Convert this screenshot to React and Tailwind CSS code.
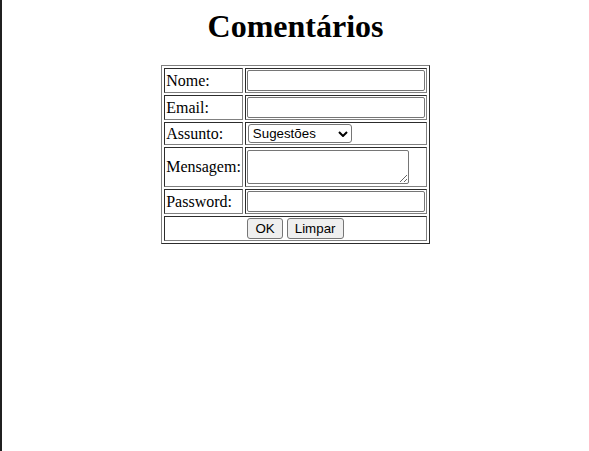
import React from "react";

const cell =
  "border border-[gray] [--tw-border-style:inset] [border-style:inset] p-px align-middle";
const inputCls =
  "block w-[178px] h-[21px] border border-[#767676] rounded-[2px] px-[2px] bg-white text-black font-['Liberation_Sans',Arial,sans-serif] text-[13.333px] outline-none";
const btnCls =
  "h-[21px] px-[7px] border border-[#767676] rounded-[3px] bg-[#efefef] text-black font-['Liberation_Sans',Arial,sans-serif] text-[13.333px] leading-none";

export default function App() {
  return (
    <div className="min-h-screen border-l-2 border-[#202020] bg-white pt-2 px-2 text-black font-['Liberation_Serif','Times_New_Roman',serif] text-[16px] leading-[normal]">
      <h1 className="text-center text-[32px] font-bold leading-[37px] mb-[20px]">
        Comentários
      </h1>
      <table className="mx-auto border-separate border-spacing-[2px] border border-[gray] [--tw-border-style:outset] [border-style:outset]">
        <tbody>
          <tr>
            <td className={cell}>Nome:</td>
            <td className={cell}>
              <input type="text" className={inputCls} />
            </td>
          </tr>
          <tr>
            <td className={cell}>Email:</td>
            <td className={cell}>
              <input type="text" className={inputCls} />
            </td>
          </tr>
          <tr>
            <td className={cell}>Assunto:</td>
            <td className={cell}>
              <div className="relative ml-px w-[104px] h-[19px]">
                <select className="block appearance-none w-[104px] h-[19px] border border-[#767676] rounded-[3px] pl-[4px] bg-white text-black font-['Liberation_Sans',Arial,sans-serif] text-[13.333px] leading-[17px] outline-none">
                  <option>Sugestões</option>
                  <option>Críticas</option>
                  <option>Outros</option>
                </select>
                <svg
                  className="absolute right-[4px] top-[7px] pointer-events-none"
                  width="10"
                  height="6"
                  viewBox="0 0 10 6"
                >
                  <path d="M1 1 L5 5 L9 1" fill="none" stroke="#000" strokeWidth="2" />
                </svg>
              </div>
            </td>
          </tr>
          <tr>
            <td className={cell}>Mensagem:</td>
            <td className={cell}>
              <textarea className="block w-[162px] h-[34px] my-px border border-[#767676] rounded-[2px] bg-white resize font-['Liberation_Mono',monospace] text-[13.333px] outline-none" />
            </td>
          </tr>
          <tr>
            <td className={cell}>Password:</td>
            <td className={cell}>
              <input type="password" className={inputCls} />
            </td>
          </tr>
          <tr>
            <td className={cell} colSpan={2}>
              <div className="flex justify-center gap-1">
                <button className={btnCls}>OK</button>
                <button className={btnCls}>Limpar</button>
              </div>
            </td>
          </tr>
        </tbody>
      </table>
    </div>
  );
}
